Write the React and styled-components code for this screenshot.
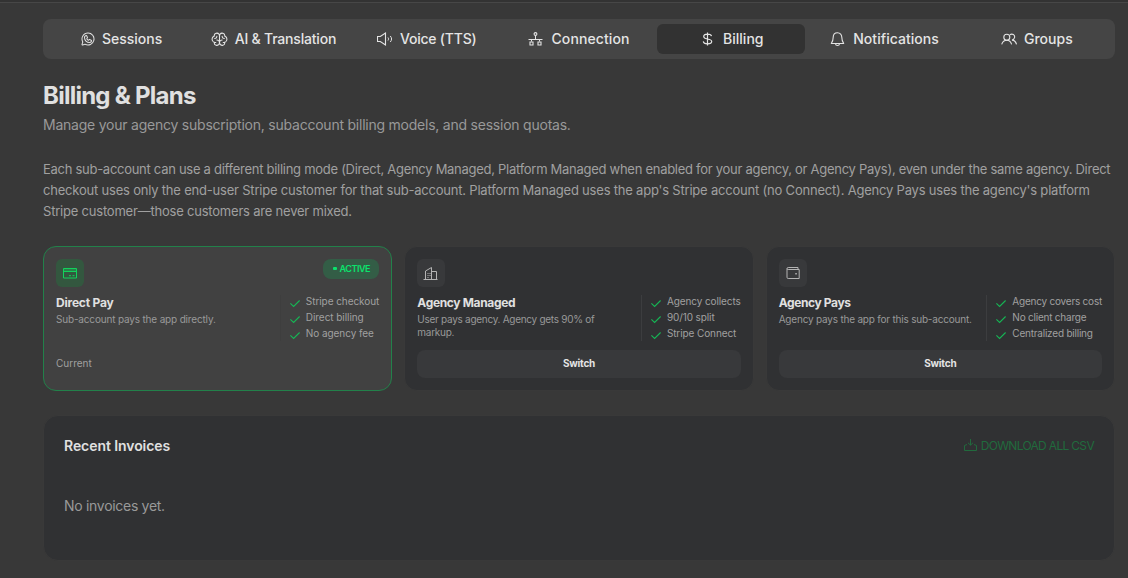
import React from 'react';
import styled, { createGlobalStyle } from 'styled-components';
import { PiWhatsappLogo, PiBrain } from 'react-icons/pi';

const GlobalStyle = createGlobalStyle`
    * {
        box-sizing: border-box;
    }

    body {
        margin: 0;
        background: #383838;
        color: #e0e0e0;
        font-family: Inter, "Open Sans", sans-serif;
    }

    h1, h2, h3, p, ul {
        margin: 0;
        padding: 0;
    }
`;

const Page = styled.div`
    width: 1128px;
    height: 578px;
    overflow: hidden;
    border-top: 2px solid #333;
`;

const Content = styled.main`
    height: 576px;
    border-top: 1px solid #474747;
    padding: 16px 13px 0 43px;
`;

const Tabs = styled.nav`
    height: 40px;
    padding: 5px;
    display: grid;
    grid-template-columns: repeat(7, 1fr);
    gap: 4px;
    border-radius: 8px;
    background: #454545;
`;

const Tab = styled.button`
    display: flex;
    align-items: center;
    justify-content: center;
    gap: ${({ $gap }) => $gap || 7}px;
    padding: ${({ $inset }) => $inset || '0 0 2px'};
    border: none;
    border-radius: 6px;
    background: ${({ $active }) => ($active ? '#323232' : 'transparent')};
    color: #e4e4e4;
    font-family: inherit;
    font-size: 14px;
    font-weight: 500;
    letter-spacing: ${({ $track }) => $track || 0}px;
    white-space: nowrap;

    svg {
        flex: none;
        margin-top: 2px;
    }
`;

const Title = styled.h1`
    margin-top: 21px;
    font-size: 24px;
    font-weight: 700;
    line-height: 32px;
    letter-spacing: -0.75px;
`;

const Subtitle = styled.p`
    margin-top: 3px;
    font-size: 14px;
    line-height: 20px;
    letter-spacing: -0.23px;
    color: #999;
`;

const Note = styled.p`
    margin-top: 24px;
    font-size: 13px;
    line-height: 21px;
    color: #a0a0a0;
    white-space: nowrap;
`;

const NoteLine = styled.span`
    display: block;
    letter-spacing: ${({ $track }) => $track}px;
`;

const Plans = styled.div`
    margin-top: 24px;
    display: grid;
    grid-template-columns: repeat(3, 1fr);
    gap: 12px;
`;

const Card = styled.section`
    height: 145px;
    padding: 12px;
    display: flex;
    flex-direction: column;
    border: 1px solid ${({ $active }) => ($active ? '#22814a' : '#393939')};
    border-radius: 13px;
    background: ${({ $active }) => ($active ? '#414141' : '#303133')};
`;

const CardTop = styled.div`
    display: flex;
    justify-content: space-between;
    align-items: flex-start;
`;

const IconBox = styled.div`
    width: 28px;
    height: 28px;
    display: flex;
    align-items: center;
    justify-content: center;
    border-radius: 6px;
    background: ${({ $active }) => ($active ? '#33573f' : '#38393b')};
    color: ${({ $active }) => ($active ? '#12d35c' : '#b4b4b4')};
`;

const Badge = styled.span`
    width: 56px;
    height: 20px;
    padding-bottom: 1px;
    display: flex;
    align-items: center;
    justify-content: center;
    gap: 3px;
    border-radius: 8px;
    background: #335d46;
    color: #0be36c;
    font-size: 9px;
    font-weight: 600;
    letter-spacing: -0.45px;

    &::before {
        content: '';
        width: 4px;
        height: 3px;
        border-radius: 1px;
        background: #0be36c;
    }
`;

const CardBody = styled.div`
    margin-top: 8px;
    height: 46px;
    display: flex;
    justify-content: space-between;
`;

const CardTitle = styled.h2`
    font-size: 12px;
    font-weight: 700;
    line-height: 16px;
    letter-spacing: ${({ $track }) => $track}px;
    white-space: nowrap;
`;

const CardText = styled.p`
    max-width: 200px;
    margin-top: 2px;
    font-size: 10px;
    line-height: 13px;
    letter-spacing: ${({ $track }) => $track}px;
    color: #999;
`;

const Features = styled.ul`
    padding-left: 9px;
    display: flex;
    flex-direction: column;
    gap: 2px;
    border-left: 1px solid ${({ $active }) => ($active ? '#3e3e3e' : '#3c3d3f')};
    letter-spacing: ${({ $track }) => $track}px;
    list-style: none;
`;

const Feature = styled.li`
    height: 14px;
    display: flex;
    gap: 5px;
    font-size: 10px;
    line-height: 12px;
    color: #a0a0a0;
    white-space: nowrap;

    svg {
        flex: none;
        margin-top: 3px;
        color: #16b655;
    }
`;

const Current = styled.div`
    margin-top: 9px;
    font-size: 10px;
    line-height: 26px;
    color: #a0a0a0;
`;

const SwitchButton = styled.button`
    height: 28px;
    margin-top: 9px;
    padding: 0 0 2px;
    border: none;
    border-radius: 8px;
    background: #38393b;
    color: #e4e4e4;
    font-family: inherit;
    font-size: 10px;
    font-weight: 700;
    letter-spacing: -0.2px;
`;

const Invoices = styled.section`
    height: 146px;
    margin-top: 24px;
    padding: 19px 20px;
    border: 1px solid #393939;
    border-radius: 15px;
    background: #303133;
`;

const InvoicesHeader = styled.div`
    height: 20px;
    display: flex;
    align-items: center;
    justify-content: space-between;
`;

const InvoicesTitle = styled.h3`
    font-size: 14px;
    font-weight: 600;
    letter-spacing: -0.07px;
`;

const Download = styled.button`
    display: flex;
    align-items: center;
    gap: 4px;
    padding: 0;
    border: none;
    background: none;
    color: #216a3d;
    font-family: inherit;
    font-size: 12px;
    letter-spacing: -0.68px;
`;

const Empty = styled.p`
    margin-top: 41px;
    font-size: 14px;
    line-height: 20px;
    letter-spacing: -0.3px;
    color: #999;
`;

const Icon = ({ w = 16, h = 16, children }) => (
    <svg width={w} height={h} viewBox={`0 0 ${w} ${h}`} fill="none" stroke="currentColor" strokeWidth="1">
        {children}
    </svg>
);

const SoundIcon = () => (
    <Icon>
        <path d="M.5 5.500h2.800L8.500 2v12L3.300 10.500H.500z" strokeWidth="1.1" />
        <path d="M11 6.500c.700.900.700 2.100 0 3M13.300 5c1.700 2 1.700 4 0 6" />
    </Icon>
);

const NetworkIcon = () => (
    <Icon w={15} h={14}>
        <circle cx="7.5" cy="2" r="1.400" strokeWidth="1.100" />
        <path d="M7.500 3.500v4M.5 7.500h14M3.500 7.500v2M11.500 7.500v2" />
        <path d="M2 10h3v3H2zM10 10h3v3h-3z" strokeWidth="1.100" />
    </Icon>
);

const DollarIcon = () => (
    <Icon w={11} h={14}>
        <path d="M5.500.5v13M9.500 4.200C9.300 2.800 8 2.200 5.500 2.200S1.700 3 1.700 4.500s1.100 2 3.800 2.500 4.200.9 4.200 2.500S8.300 11.800 5.500 11.800s-4-.8-4.200-2.400" strokeWidth="1.200" />
    </Icon>
);

const BellIcon = () => (
    <Icon w={15}>
        <path d="M7.500 1.700C4.800 1.700 3.200 3.700 3.200 6.300c0 3-.6 4.500-1.900 6.200h12.400c-1.300-1.700-1.900-3.200-1.900-6.200C11.800 3.700 10.200 1.700 7.500 1.700z" strokeWidth="1.100" strokeLinejoin="round" />
        <path d="M5.500 12.700c.2 2.300 3.800 2.300 4 0" strokeWidth="1.100" />
    </Icon>
);

const GroupsIcon = () => (
    <Icon>
        <circle cx="5.800" cy="6.300" r="3" strokeWidth="1.100" />
        <path d="M.7 13.300C1.600 10.600 3 9.300 5.800 9.300s4 1.300 4.800 4M8.800 3.800c2.600-1.700 5.300.200 4.800 2.700-.3 1.400-1.200 2.200-2.600 2.600 2.500.1 3.800 1.600 4.500 4.200" strokeWidth="1.100" />
    </Icon>
);

const CardIcon = () => (
    <Icon w={14} h={12}>
        <path d="M.5 1.500h13v9.500H.5z" />
        <path d="M1 2h12v2H1z" fill="currentColor" fillOpacity=".35" stroke="none" />
        <path d="M.500 4.500h13M6 8.700h2M9.500 8.700h2" />
    </Icon>
);

const BuildingIcon = () => (
    <Icon w={16} h={14}>
        <path d="M.5 13.500h14M2.500 13.500V5L8.500 1.500v12M8.500 5.500h5v8" />
        <path d="M4.500 7.500h1M6.500 7.500h1M4.500 9.500h1M6.500 9.500h1M4.500 11.500h1" />
    </Icon>
);

const WalletIcon = () => (
    <Icon w={14} h={12}>
        <path d="M12 2.500v-2H2.200C1.400.500 1 1 1 1.800v8.500c0 .8.400 1.200 1.200 1.200h11v-9h-11C1.400 2.500 1 2.300 1 1.700" />
        <path d="M9.300 6.700h1.500" strokeWidth="1.500" />
    </Icon>
);

const CheckIcon = () => (
    <Icon w={11} h={10}>
        <path d="M.4 5.400l3.200 3.100L9.600 2.500" strokeWidth="1.100" />
    </Icon>
);

const DownloadIcon = () => (
    <Icon w={13} h={12}>
        <path d="M6.500 0v6M4 3.800l2.500 2.400L9 3.800M3 5.500L.500 6.500v5h12v-5L10 5.500" />
    </Icon>
);

const tabs = [
    { label: 'Sessions', icon: <PiWhatsappLogo size={16} />, gap: 6, inset: '0 2px 2px 0' },
    { label: 'AI & Translation', icon: <PiBrain size={17} />, track: -0.2, inset: '0 2px 2px 0' },
    { label: 'Voice (TTS)', icon: <SoundIcon />, track: -0.22 },
    { label: 'Connection', icon: <NetworkIcon />, track: 0.1, gap: 8 },
    { label: 'Billing', icon: <DollarIcon />, gap: 10, inset: '0 0 2px 3px', active: true },
    { label: 'Notifications', icon: <BellIcon />, gap: 8, track: 0.05, inset: '0 0 2px 2px' },
    { label: 'Groups', icon: <GroupsIcon />, inset: '0 0 2px 2px' },
];

const plans = [
    {
        name: 'Direct Pay',
        nameTrack: -0.2,
        text: 'Sub-account pays the app directly.',
        textTrack: -0.17,
        icon: <CardIcon />,
        features: ['Stripe checkout', 'Direct billing', 'No agency fee'],
        featureTrack: -0.06,
        active: true,
    },
    {
        name: 'Agency Managed',
        nameTrack: -0.34,
        text: 'User pays agency. Agency gets 90% of markup.',
        textTrack: -0.28,
        icon: <BuildingIcon />,
        features: ['Agency collects', '90/10 split', 'Stripe Connect'],
        featureTrack: -0.1,
    },
    {
        name: 'Agency Pays',
        nameTrack: -0.38,
        text: 'Agency pays the app for this sub-account.',
        textTrack: -0.2,
        icon: <WalletIcon />,
        features: ['Agency covers cost', 'No client charge', 'Centralized billing'],
        featureTrack: -0.22,
    },
];

const PlanCard = ({ plan }) => {
    return (
        <Card $active={plan.active}>
            <CardTop>
                <IconBox $active={plan.active}>{plan.icon}</IconBox>
                {plan.active && <Badge>ACTIVE</Badge>}
            </CardTop>
            <CardBody>
                <div>
                    <CardTitle $track={plan.nameTrack}>{plan.name}</CardTitle>
                    <CardText $track={plan.textTrack}>{plan.text}</CardText>
                </div>
                <Features $active={plan.active} $track={plan.featureTrack}>
                    {plan.features.map(feature => (
                        <Feature key={feature}>
                            <CheckIcon />
                            {feature}
                        </Feature>
                    ))}
                </Features>
            </CardBody>
            {plan.active ? <Current>Current</Current> : <SwitchButton>Switch</SwitchButton>}
        </Card>
    )
}

const App = () => {
    return (
        <Page>
            <GlobalStyle />
            <Content>
                <Tabs>
                    {tabs.map(tab => (
                        <Tab key={tab.label} $active={tab.active} $track={tab.track} $gap={tab.gap} $inset={tab.inset}>
                            {tab.icon}
                            {tab.label}
                        </Tab>
                    ))}
                </Tabs>
                <Title>Billing &amp; Plans</Title>
                <Subtitle>Manage your agency subscription, subaccount billing models, and session quotas.</Subtitle>
                <Note>
                    <NoteLine $track={-0.278}>
                        Each sub-account can use a different billing mode (Direct, Agency Managed, Platform Managed when enabled for your agency, or Agency Pays), even under the same agency. Direct
                    </NoteLine>
                    <NoteLine $track={-0.203}>
                        checkout uses only the end-user Stripe customer for that sub-account. Platform Managed uses the app's Stripe account (no Connect). Agency Pays uses the agency's platform
                    </NoteLine>
                    <NoteLine $track={-0.21}>
                        Stripe customer—those customers are never mixed.
                    </NoteLine>
                </Note>
                <Plans>
                    {plans.map(plan => (
                        <PlanCard key={plan.name} plan={plan} />
                    ))}
                </Plans>
                <Invoices>
                    <InvoicesHeader>
                        <InvoicesTitle>Recent Invoices</InvoicesTitle>
                        <Download>
                            <DownloadIcon />
                            DOWNLOAD ALL CSV
                        </Download>
                    </InvoicesHeader>
                    <Empty>No invoices yet.</Empty>
                </Invoices>
            </Content>
        </Page>
    )
}

export default App;
